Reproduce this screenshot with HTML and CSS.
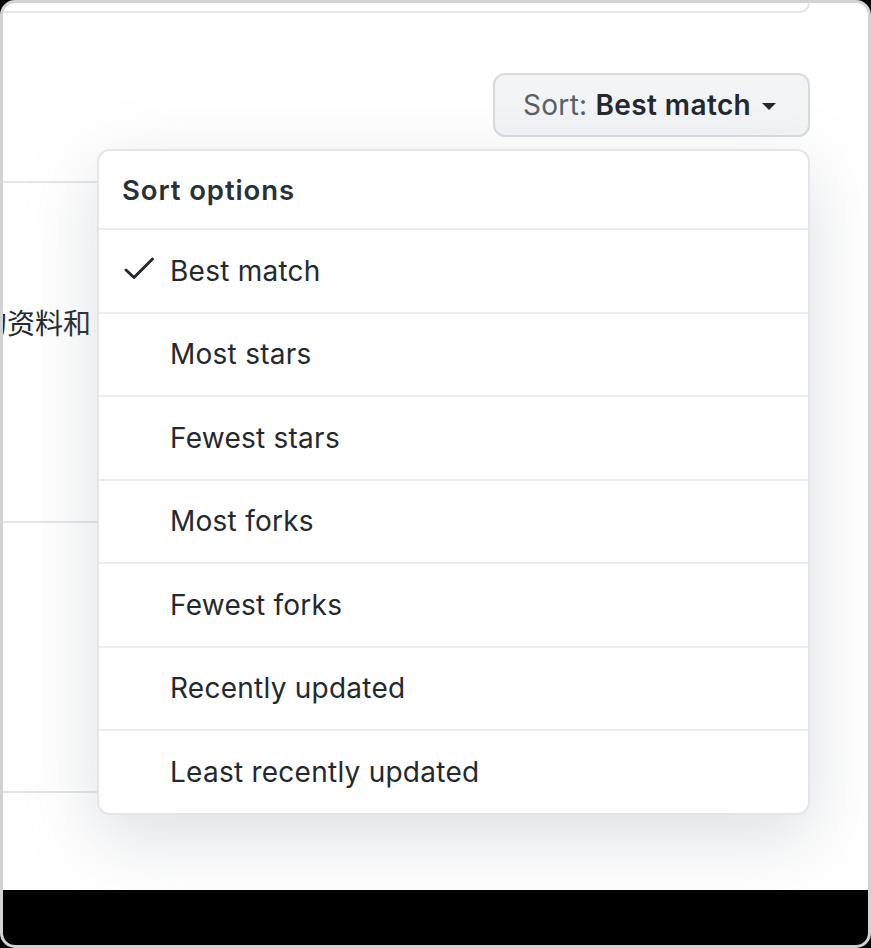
FILE: index.html
```html
<!DOCTYPE html>
<html lang="en">
<head>
<meta charset="utf-8">
<title>Sort options</title>
<link rel="stylesheet" href="styles.css">
</head>
<body>
<div class="frame">
  <div class="main">
    <div class="prev-card"></div>
    <div class="toolbar">
      <button class="sort-btn" type="button">
        <span class="sort-label">Sort:</span>
        <span class="sort-value">Best match</span>
        <span class="caret"></span>
      </button>
    </div>
    <div class="results">
      <div class="result result-1">
        <p class="desc">的资料和</p>
      </div>
      <div class="result result-2"></div>
      <div class="result result-3"></div>
    </div>

    <div class="menu">
      <div class="menu-header">Sort options</div>
      <div class="menu-item selected">
        <svg class="check" width="32" height="26" viewBox="0 0 32 26" aria-hidden="true">
          <polyline points="3,14 11,21.5 29.5,3" fill="none" stroke="#24292e" stroke-width="3" stroke-linecap="round" stroke-linejoin="round"/>
        </svg>
        <span>Best match</span>
      </div>
      <div class="menu-item"><span>Most stars</span></div>
      <div class="menu-item"><span>Fewest stars</span></div>
      <div class="menu-item"><span>Most forks</span></div>
      <div class="menu-item"><span>Fewest forks</span></div>
      <div class="menu-item"><span>Recently updated</span></div>
      <div class="menu-item"><span>Least recently updated</span></div>
    </div>
  </div>
  <div class="bottom-bar"></div>
</div>
</body>
</html>
```

FILE: styles.css
```css
html {
  background: #000;
}
body {
  margin: 0;
  background: #000;
  font-family: Inter, "Liberation Sans", "Noto Sans CJK SC", sans-serif;
  color: #24292e;
}
.frame {
  width: 871px;
  height: 948px;
  box-sizing: border-box;
  border: 3px solid #d3d3d3;
  border-radius: 15px;
  background: #fff;
  overflow: hidden;
  display: flex;
  flex-direction: column;
}
.main {
  position: relative;
  height: 887px;
  padding-right: 58px;
  display: flex;
  flex-direction: column;
  overflow: hidden;
}
.prev-card {
  height: 8px;
  margin-left: -14px;
  border: 2px solid #e3e5e8;
  border-top: 0;
  border-bottom-right-radius: 11px;
  flex: none;
}
.toolbar {
  display: flex;
  justify-content: flex-end;
  padding-top: 60px;
  flex: none;
}
.sort-btn {
  height: 64px;
  width: 317px;
  box-sizing: border-box;
  border: 2px solid #d8dbde;
  border-radius: 12px;
  background: #f3f4f6;
  display: flex;
  align-items: center;
  padding: 0 0 0 28px;
  font-family: Inter, "Liberation Sans", sans-serif;
  font-size: 28px;
  line-height: 40px;
  color: #24292e;
  white-space: nowrap;
}
.sort-btn > span {
  flex: none;
}
.sort-label {
  color: #586069;
  font-weight: 400;
  letter-spacing: 0.3px;
  margin-right: 8px;
}
.sort-value {
  font-weight: 600;
  letter-spacing: 0.4px;
}
.caret {
  width: 0;
  height: 0;
  border-style: solid;
  border-width: 7px 7px 0 7px;
  border-color: #24292e transparent transparent transparent;
  margin-left: 11px;
  margin-top: 2px;
}
.results {
  margin-top: 44px;
  flex: none;
}
.result {
  border-top: 2px solid #e3e5e8;
  box-sizing: content-box;
}
.result-1 {
  height: 338px;
}
.result-2 {
  height: 268px;
}
.result-3 {
  height: 100px;
}
.desc {
  margin: 0 0 0 -24px;
  padding-top: 118px;
  font-family: "Noto Sans CJK SC", "Noto Sans", sans-serif;
  font-size: 28px;
  line-height: 42px;
  white-space: nowrap;
  color: #24292e;
}
.menu {
  position: absolute;
  top: 146px;
  left: 94px;
  width: 713px;
  box-sizing: border-box;
  background: #fff;
  border: 2px solid #e3e5e8;
  border-radius: 13px;
  box-shadow: 0 22px 70px rgba(140, 149, 159, 0.3);
  overflow: hidden;
}
.menu-header {
  height: 77px;
  display: flex;
  align-items: center;
  padding-left: 23px;
  padding-top: 1px;
  box-sizing: border-box;
  font-size: 27.5px;
  font-weight: 600;
  letter-spacing: 0.9px;
  color: #2b3036;
}
.menu-item {
  height: 83.5px;
  box-sizing: border-box;
  border-top: 2px solid #eaecef;
  display: flex;
  align-items: center;
  padding-left: 71px;
  font-size: 28px;
  letter-spacing: 0.25px;
  color: #24292e;
  position: relative;
}
.menu-item .check {
  position: absolute;
  left: 24px;
  top: 26px;
}
.bottom-bar {
  height: 55px;
  background: #000;
  flex: none;
}
```
